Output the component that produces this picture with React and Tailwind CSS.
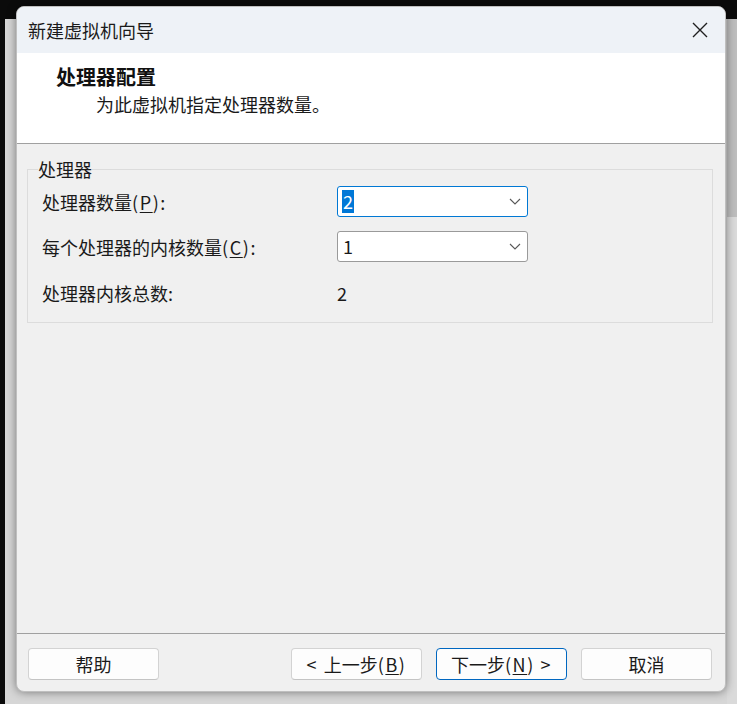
import React from "react";

const font = "font-['Noto_Sans_CJK_SC','Microsoft_YaHei',sans-serif]";

const Chevron = () => (
  <svg width="12" height="7" viewBox="0 0 12 7" className="text-[#5a5a5a]">
    <path d="M1 1l5 5 5-5" fill="none" stroke="currentColor" strokeWidth="1.1" />
  </svg>
);

// latin bits in the labels run a little wider than the CJK font's own
const Lat = ({ children }) => <span className="tracking-[1.6px]">{children}</span>;
const Key = ({ children }) => <span className="underline underline-offset-2">{children}</span>;

const Combo = ({ value, focused }) => (
  <div
    className={`flex h-[31px] w-[191px] items-center justify-between rounded-[3px] border bg-white pl-[4px] pr-[6px] ${
      focused ? "border-[#0078d4]" : "border-[#9a9a9a]"
    }`}
  >
    {focused ? (
      <span className="bg-[#0078d7] px-[1px] text-[18px] leading-[23px] text-white">{value}</span>
    ) : (
      <span className="px-[1px] text-[18px] leading-[23px] text-[#1a1a1a]">{value}</span>
    )}
    <Chevron />
  </div>
);

const Button = ({ children, primary }) => (
  <button
    className={`h-[32px] w-[131px] rounded-[4px] border bg-[#fdfdfd] text-[18px] leading-[24px] text-[#1a1a1a] ${
      primary ? "border-[#0067c0]" : "border-[#d3d3d3] border-b-[#c4c4c4]"
    }`}
  >
    {children}
  </button>
);

export default function App() {
  return (
    <div className={`relative h-[704px] w-[737px] overflow-hidden bg-[#0b0b0b] ${font}`}>
      {/* window behind */}
      <div className="absolute left-[5px] top-[19px] right-0 bottom-0 flex bg-[#d6d6d6]">
        <div className="flex-1" />
        <div className="flex w-[10px] flex-col">
          <div className="h-[198px] bg-[#bdbdbd]" />
          <div className="flex-1 bg-[#dadada]" />
        </div>
      </div>

      {/* dialog */}
      <div className="absolute left-[16px] top-[6px] flex h-[686px] w-[710px] flex-col overflow-hidden rounded-[8px] border border-[#bfbfbf] bg-[#f0f0f0] shadow-[0_0_10px_rgba(0,0,0,0.45)]">
        <div className="flex h-[46px] items-center justify-between bg-[#eef2f7] pl-[11px] pr-[17px]">
          <span className="text-[18px] leading-[24px] text-[#1a1a1a]">新建虚拟机向导</span>
          <svg width="16" height="16" viewBox="0 0 16 16" className="text-[#1f1f1f]">
            <path d="M1 1l14 14M15 1L1 15" stroke="currentColor" strokeWidth="1.4" fill="none" />
          </svg>
        </div>

        <div className="h-[91px] border-b border-[#a0a0a0] bg-white pl-[39px] pt-[12px]">
          <div className="text-[20px] font-bold leading-[24px] text-[#111]">处理器配置</div>
          <div className="mt-[3px] pl-[40px] text-[18px] leading-[24px] text-[#1a1a1a]">
            为此虚拟机指定处理器数量。
          </div>
        </div>

        <div className="flex-1 pl-[10px] pr-[12px] pt-[15px]">
          <fieldset className="border border-[#dcdcdc] pb-[17px] pl-[14px]">
            <legend className="ml-[-4px] px-0 text-[18px] leading-[20px] text-[#1a1a1a]">处理器</legend>
            <div className="grid grid-cols-[295px_191px] items-center pt-[7px] text-[18px] leading-[24px] text-[#1a1a1a]">
              <span>
                处理器数量<Lat>(<Key>P</Key>):</Lat>
              </span>
              <Combo value="2" focused />
              <span className="mt-[14px]">
                每个处理器的内核数量<Lat>(<Key>C</Key>):</Lat>
              </span>
              <div className="mt-[14px]">
                <Combo value="1" />
              </div>
              <span className="mt-[19px]">处理器内核总数:</span>
              <span className="mt-[19px]">2</span>
            </div>
          </fieldset>
        </div>

        <div className="flex h-[58px] items-start border-t border-[#a0a0a0] pl-[11px] pr-[13px] pt-[14px]">
          <Button>帮助</Button>
          <div className="flex-1" />
          <div className="flex gap-[14px]">
            <Button>
              <Lat>&lt; </Lat>上一步<Lat>(<Key>B</Key>)</Lat>
            </Button>
            <Button primary>
              下一步<Lat>(<Key>N</Key>) &gt;</Lat>
            </Button>
            <Button>取消</Button>
          </div>
        </div>
      </div>
    </div>
  );
}
